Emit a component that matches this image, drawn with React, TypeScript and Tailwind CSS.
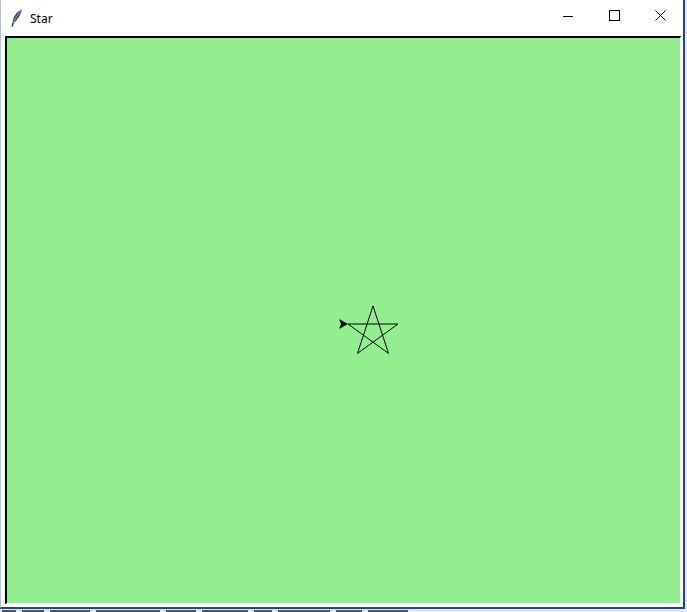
import React from "react";

const star: [number, number][] = [
  [341, 286],
  [391, 286],
  [350.5, 315.4],
  [366, 267.9],
  [381.5, 315.4],
  [341, 286],
];

// fragments of the window behind, peeking out under the bottom edge
const marks = [14, 22, 40, 64, 30, 46, 18, 52, 26, 40];

function Feather() {
  return (
    <svg width="12" height="18" viewBox="0 0 12 18" className="shrink-0">
      <path d="M11 0.5 C5.5 2.5 1.5 8 1.5 15 C5.5 12 9.5 7 11 0.5 Z" fill="#324a6e" />
      <path d="M10.5 1.5 C7 5 4.5 9 2.2 14.5" stroke="#b8c8dc" strokeWidth="0.7" fill="none" />
      <path d="M2.2 14 L1 17.5" stroke="#1f2d44" strokeWidth="1.3" />
    </svg>
  );
}

export default function App() {
  return (
    <div className="w-[687px] h-[612px] overflow-hidden bg-[#dce7f3] flex flex-col">
      <div className="w-[685px] h-[609px] shrink-0 bg-white border-l border-[#a9c4e4] border-r-2 border-r-[#23467d] border-b-2 border-b-[#23467d] flex flex-col">
        <div className="h-[36px] shrink-0 flex items-start">
          <div className="flex items-center gap-[7px] pl-[10px] pt-[9px]">
            <Feather />
            <span
              className="text-[12px] text-black leading-none pt-[1px]"
              style={{ fontFamily: '"Noto Sans", "Liberation Sans", sans-serif' }}
            >
              Star
            </span>
          </div>
          <div className="ml-auto flex">
            <div className="w-[46px] h-[31px] flex items-center justify-center">
              <svg width="10" height="10" viewBox="0 0 10 10">
                <line x1="0" y1="5.5" x2="10" y2="5.5" stroke="#000" strokeWidth="1" />
              </svg>
            </div>
            <div className="w-[46px] h-[31px] flex items-center justify-center">
              <svg width="11" height="11" viewBox="0 0 11 11">
                <rect x="0.5" y="0.5" width="10" height="10" fill="none" stroke="#000" strokeWidth="1" />
              </svg>
            </div>
            <div className="w-[46px] h-[31px] flex items-center justify-center">
              <svg width="11" height="11" viewBox="0 0 11 11">
                <path d="M0.5 0.5 L10.5 10.5 M10.5 0.5 L0.5 10.5" stroke="#000" strokeWidth="1" />
              </svg>
            </div>
          </div>
        </div>
        <div className="ml-[4px] w-[676px] h-[568px] shrink-0 relative bg-[#92ee8e] border-t-2 border-l-2 border-black border-r border-b border-r-[#eef5ee] border-b-[#eef5ee]">
          <svg className="absolute inset-0" width="673" height="565" viewBox="0 0 673 565">
            <polyline
              points={star.map((p) => p.join(",")).join(" ")}
              fill="none"
              stroke="#000"
              strokeWidth="1"
            />
            <polygon points="341,286 332,281 334,286 332,291" fill="#000" />
          </svg>
        </div>
      </div>
      <div className="h-[3px] flex items-end gap-[6px] pl-[2px]">
        {marks.map((w, i) => (
          <div key={i} className="h-[2px] bg-[#4a5566]" style={{ width: w }} />
        ))}
      </div>
    </div>
  );
}
